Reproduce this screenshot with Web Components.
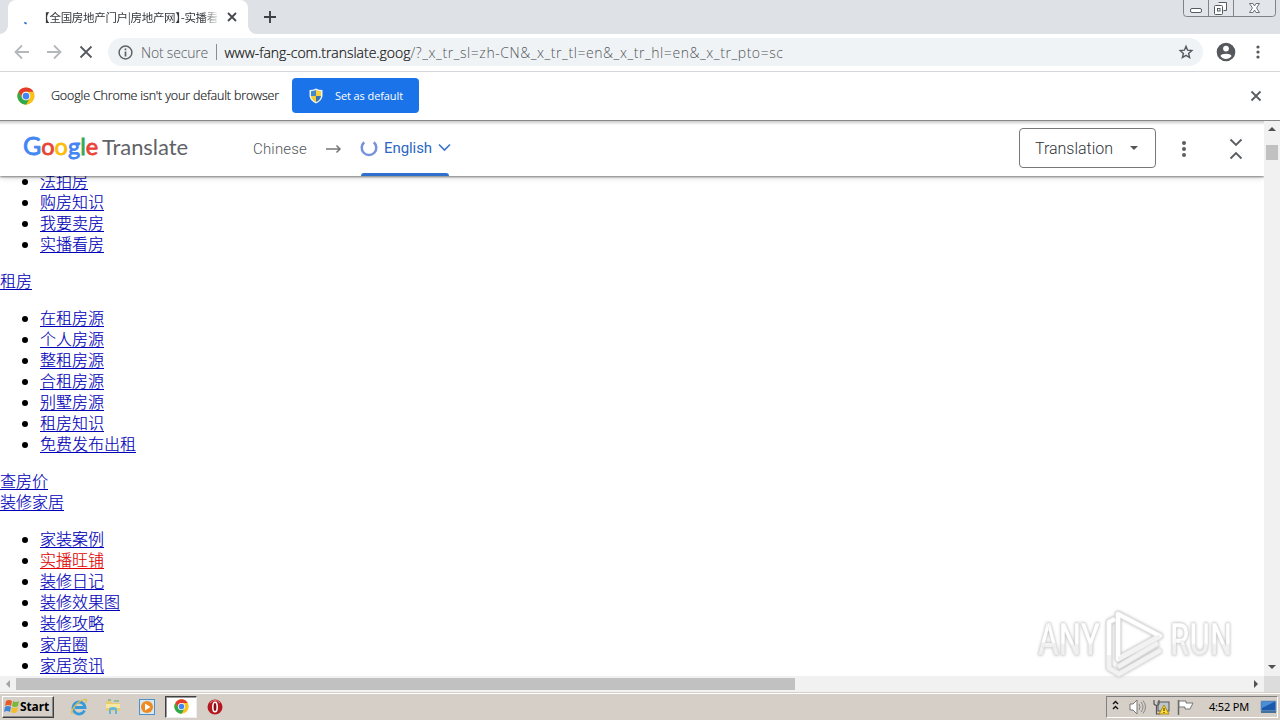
<!DOCTYPE html>
<html lang="en"><head><meta charset="utf-8"><title>Browser desktop</title>
<style>html,body{margin:0;width:1280px;height:720px;overflow:hidden;background:#fff}</style></head>
<body><desktop-screen></desktop-screen>
<script>
function define(name, html, setup) {
  const t = document.createElement('template');
  t.innerHTML = html;
  customElements.define(name, class extends HTMLElement {
    connectedCallback() {
      if (this.shadowRoot) return;
      this.attachShadow({mode: 'open'}).append(t.content.cloneNode(true));
      if (setup) setup(this, this.shadowRoot);
    }
  });
}

/* Text tracked out or in so that it fills the width given by its "w" attribute. */
define('fit-text', `<style>:host{display:inline-block;white-space:pre;flex:none}span{display:inline-block}</style><span><slot></slot></span>`, (el, root) => {
  const s = root.querySelector('span'), w = +el.getAttribute('w');
  const n = [...el.textContent].length;
  s.style.letterSpacing = ((w - s.getBoundingClientRect().width) / n) + 'px';
  el.style.width = w + 'px';
});

define('chrome-logo', `<style>:host{display:block;width:18px;height:18px;flex:none}svg{display:block;width:100%;height:100%}</style>
<svg viewBox="0 0 48 48"><circle cx="24" cy="24" r="23" fill="#fbc116"/>
<path d="M4.1 12.5A23 23 0 0 1 43.9 12.5H24A11.5 11.5 0 0 0 14 29.7Z" fill="#e33b2e"/>
<path d="M4.1 12.5A23 23 0 0 0 24 47L34 29.7A11.5 11.5 0 0 1 14 29.7Z" fill="#2da94f"/>
<circle cx="24" cy="24" r="11.5" fill="#fff"/><circle cx="24" cy="24" r="9" fill="#4285f4"/></svg>`);

define('window-buttons', `<style>:host{display:block;width:95px;height:18px}svg{display:block}</style>
<svg width="95" height="18" fill="none"><path d="M.5 0V13.5Q.5 16.5 3.5 16.5H89.5Q92.5 16.5 92.5 13.5V0" fill="#e2e5ea" stroke="#7f848c"/><path d="M25.5 0V16M50.5 0V16" stroke="#7f848c"/>
<rect x="7.500" y="8.500" width="11" height="4" rx="1.500" fill="#fff" stroke="#555a63"/>
<path d="M35.500 2.500h8v8h-3" stroke="#555a63" fill="#fff"/><rect x="31.500" y="5.500" width="8" height="9" rx="1" fill="#fff" stroke="#555a63"/><rect x="34.500" y="8.500" width="2.500" height="2.500" stroke="#555a63"/>
<path d="M66.500 3.500h3.500l1.500 2.500 1.500-2.500h3.500l-3 4.500 3 4.500H73l-1.500-2.500-1.500 2.500h-3.500l3-4.500z" fill="#fff" stroke="#60656e" stroke-width=".9"/></svg>`);

define('tab-strip', `<style>
:host{display:flex;height:34px;background:#dee1e6;position:relative;font:12px "Noto Sans","Noto Sans CJK SC",sans-serif;color:#35383c}
.tab{margin-left:8px;width:240px;background:#fff;border-radius:8px 8px 0 0;display:flex;align-items:center;position:relative}
.tab:before,.tab:after{content:"";position:absolute;bottom:0;width:8px;height:8px;left:-8px;background:radial-gradient(circle at 0 0,#dee1e6 7.5px,#fff 8px)}
.tab:after{left:auto;right:-8px;background:radial-gradient(circle at 100% 0,#dee1e6 7.5px,#fff 8px)}
.load{width:36px;flex:none}.load svg,.x,.plus{display:block}
.title{width:174px;overflow:hidden;white-space:nowrap;font-size:11.500px;font-family:"Noto Sans CJK SC",sans-serif;font-feature-settings:"halt";line-height:20px;-webkit-mask-image:linear-gradient(90deg,#000 158px,transparent 176px)}
.x{margin-left:9px}.plus{margin:11px 0 0 15px}
window-buttons{position:absolute;right:2px;top:0}</style>
<div class="tab"><div class="load"><svg width="36" height="34"><path d="M16.300 22.500l2.300 1.200" stroke="#2a6ed8" stroke-width="1.700"/></svg></div>
<div class="title"><fit-text w="174">【全国房地产门户|房地产网】-实播看</fit-text></div>
<svg class="x" width="10" height="10"><path d="M1 1l8 8M9 1l-8 8" stroke="#45494d" stroke-width="1.800"/></svg></div>
<svg class="plus" width="14" height="12"><path d="M7 0v12M1 6h12" stroke="#3c4043" stroke-width="1.900"/></svg>
<window-buttons></window-buttons>`);

define('address-bar', `<style>
:host{display:flex;box-sizing:border-box;height:38px;border-bottom:1px solid #d5d7da;padding:0 0 1px 14px;align-items:center;background:#fff;font:300 14px "Open Sans",sans-serif;color:#53575c}
svg{display:block;flex:none}.nav{margin-right:16px}.nav.stop{margin-right:14px}
.omni{width:1095px;height:28px;border-radius:14px;background:#f0f3f5;display:flex;align-items:center;box-sizing:border-box;padding-left:10px}
.info{margin-right:8px}.sep{width:1px;height:16px;background:#8a8e92;margin:0 8px 0 7.500px}.host{color:#111;-webkit-text-stroke:.2px #111}
.star{margin-left:auto;margin-right:9px}.user{margin-left:13px}.more{margin-left:19px}</style>
<svg class="nav" width="16" height="16" fill="none" stroke="#b5b8bb" stroke-width="1.800"><path d="M15 8H2M8 1.500L1.500 8 8 14.500"/></svg>
<svg class="nav" width="16" height="16" fill="none" stroke="#b5b8bb" stroke-width="1.800"><path d="M1 8h13M8 1.500L14.500 8 8 14.500"/></svg>
<svg class="nav stop" width="16" height="16" stroke="#55595e" stroke-width="1.800"><path d="M2.500 2.500l11 11M13.500 2.500l-11 11"/></svg>
<div class="omni"><svg class="info" width="15" height="15" fill="none" stroke="#5f6368"><circle cx="7.500" cy="7.500" r="6.400" stroke-width="1.500"/><path d="M7.500 6.500v5M7.500 3.500v1.800" stroke-width="1.700"/></svg>
<fit-text w="67">Not secure</fit-text><div class="sep"></div><fit-text class="host" w="186">www-fang-com.translate.goog</fit-text><fit-text w="373">/?_x_tr_sl=zh-CN&amp;_x_tr_tl=en&amp;_x_tr_hl=en&amp;_x_tr_pto=sc</fit-text>
<svg class="star" width="16" height="16" viewBox="0 0 16 16"><path d="M8 2.300l1.600 3.900 4.200.4-3.200 2.800 1 4.100L8 11.300l-3.600 2.200 1-4.100-3.200-2.800 4.200-.4z" fill="none" stroke="#55595e" stroke-width="1.400"/></svg></div>
<svg class="user" width="20" height="20"><circle cx="10" cy="10" r="9.300" fill="#55595e"/><circle cx="10" cy="6.600" r="2.900" fill="#fff"/><path d="M4.400 14c1-3 10.200-3 11.200 0-2.700 3.900-8.500 3.900-11.200 0z" fill="#fff"/></svg>
<svg class="more" width="6" height="16" fill="#55595e"><circle cx="3" cy="3" r="1.600"/><circle cx="3" cy="8" r="1.600"/><circle cx="3" cy="13" r="1.600"/></svg>`);

define('default-browser-bar', `<style>
:host{display:flex;height:48px;box-sizing:border-box;padding:0 0 1px 17px;align-items:center;background:#fff;font:300 12.500px "Open Sans",sans-serif;color:#202124}
.msg{margin-left:16px;-webkit-text-stroke:.2px #202124}.btn{margin-left:13px;width:127px;height:35px;border-radius:4px;background:#1a73e8;color:#fff;display:flex;align-items:center;box-sizing:border-box;padding-left:17px;font-size:11px;font-weight:400}
.btn svg{margin-right:12px}.close{margin:0 18px 0 auto}</style>
<chrome-logo></chrome-logo><fit-text class="msg" w="228">Google Chrome isn't your default browser</fit-text>
<div class="btn"><svg width="14" height="16"><path d="M7 .5Q10 2 13.500 2v6Q13 13 7 15.500Q1 13 .5 8V2Q4 2 7 .5Z" fill="#eef3f5"/><path d="M7 2Q5 3 2 3.200V8h5z" fill="#4389cc"/><path d="M7 2Q9 3 12 3.200V8H7z" fill="#f6d13c"/><path d="M2 8q.5 4 5 6V8z" fill="#f5ce35"/><path d="M12 8q-.5 4-5 6V8z" fill="#3873b6"/></svg><fit-text w="68">Set as default</fit-text></div>
<svg class="close" width="12" height="12"><path d="M1.500 1.500l9 9M10.500 1.500l-9 9" stroke="#5b5f63" stroke-width="1.900"/></svg>`);

define('google-wordmark', `<style>:host{display:flex;align-items:baseline;font:400 23.500px/32px "Lato",sans-serif;color:#5f6368}
.g{display:flex;align-items:baseline;width:74px;justify-content:space-between;margin-right:5px;-webkit-text-stroke:.8px}.b{color:#4285f4}.r{color:#ea4335}.y{color:#fbbc05}.n{color:#34a853}.G{font-size:25px}.t{font-size:22px}</style>
<div class="g"><span class="b G">G</span><span class="r">o</span><span class="y">o</span><span class="b">g</span><span class="n">l</span><span class="r">e</span></div><fit-text class="t" w="86">Translate</fit-text>`);

define('translate-bar', `<style>
:host{display:flex;height:55px;width:1264px;box-sizing:border-box;padding-left:23px;align-items:center;background:#fff;position:relative;z-index:2;box-shadow:0 1px 2px #0007,0 2px 6px #0002;font:300 15px Roboto,sans-serif;color:#53575c}
:host:before{content:"";position:absolute;left:0;right:0;top:0;height:4px;background:linear-gradient(#0003,#0000)}
svg{display:block;flex:none}google-wordmark{width:165px;margin-top:-5px}.zh{margin-left:65px}.arr{margin:0 0 0 18px}
.en{margin-left:19px;width:88px;height:55px;display:flex;align-items:center;color:#2b67c5;position:relative;padding-bottom:2px;box-sizing:border-box;font-weight:400}
.en:after{content:"";position:absolute;left:0;right:0;bottom:0;height:3px;border-radius:3px 3px 0 0;background:#2f6fce}
.en fit-text{margin:0 6px 0 6px}
.sel{margin-left:570px;width:137px;height:40px;box-sizing:border-box;border:1px solid #777;border-radius:4px;display:flex;align-items:center;justify-content:space-between;padding:0 17px 0 15px;font-size:16px;color:#303337;margin-top:-1px}
.more{margin-left:25px}.fold{margin-left:42px}</style>
<google-wordmark></google-wordmark><fit-text class="zh" w="54">Chinese</fit-text>
<svg class="arr" width="17" height="10" fill="none" stroke="#777" stroke-width="1.500"><path d="M1 5h14M11.500 1.500L15 5l-3.500 3.500"/></svg>
<div class="en"><svg width="18" height="18" fill="none" style="margin-left:-1px"><path d="M4.200 3.200A7.300 7.300 0 1 0 13.800 3.200" stroke="#7592db" stroke-width="2.500"/></svg><fit-text w="48">English</fit-text><svg width="13" height="9" fill="none"><path d="M1 1.500l5.500 5.500L12 1.500" stroke="#3973ca" stroke-width="1.600"/></svg></div>
<div class="sel"><fit-text w="78">Translation</fit-text><svg width="8" height="4"><path d="M0 0h8L4 4z" fill="#555"/></svg></div>
<svg class="more" width="6" height="18" fill="#5b5e62"><circle cx="3" cy="3" r="2"/><circle cx="3" cy="9" r="2"/><circle cx="3" cy="15" r="2"/></svg>
<svg class="fold" width="14" height="22" fill="none" stroke="#5b5e62" stroke-width="1.900"><path d="M1.500 1.500L7 7l5.500-5.500M1.500 20.500L7 15l5.500 5.500"/></svg>`);

define('link-list', `<style>:host{display:block}ul{margin:0;padding:16px 0 16px 40px;list-style:none}li{height:21px;line-height:21px;white-space:nowrap;position:relative}li:before{content:"";position:absolute;left:-18px;top:8px;width:6px;height:6px;border-radius:50%;background:#000}
a{color:#0000b8;-webkit-text-stroke:.15px;text-decoration:underline;text-underline-offset:2px;text-decoration-thickness:1px}a.hot{color:#e00000}</style><ul></ul>`, (el, root) => {
  const ul = root.querySelector('ul');
  for (const name of el.getAttribute('items').split(',')) {
    const li = document.createElement('li'), a = document.createElement('a');
    a.textContent = name.replace('*', '');
    if (name.startsWith('*')) a.className = 'hot';
    a.href = '#'; li.append(a); ul.append(li);
  }
});

define('run-watermark', `<style>:host{display:block}svg{display:block;filter:drop-shadow(0 0 1.500px #b4b4b4)}text{font:500 44px Roboto,sans-serif}</style>
<svg width="210" height="72" fill="#fff" stroke-linejoin="round"><defs><linearGradient id="f" x1="0" y1="0" x2="0" y2="1"><stop offset=".55" stop-color="#fff"/><stop offset=".6" stop-color="#f0f0f0"/></linearGradient></defs><g stroke="#ddd" stroke-width=".4" fill="url(#f)"><text x="5" y="50" textLength="62" lengthAdjust="spacingAndGlyphs">ANY</text><text x="137" y="50" textLength="62" lengthAdjust="spacingAndGlyphs">RUN</text></g>
<g fill="none" stroke="#e3e3e3" stroke-width="6"><path d="M82 14l-6 3v46l10 6 42-24M85 9v45l42-23zM85 62l40-24"/></g><g fill="none" stroke="#fff" stroke-width="4"><path d="M82 14l-6 3v46M85 9v45l42-23z"/></g><g fill="none" stroke="#f2f2f2" stroke-width="4"><path d="M85 54l42-23M85 62l40-24M76 50v13l10 6 42-24"/></g></svg>`);

define('scroll-bar', `<style>:host{display:flex;background:#f1f1f1;align-items:center;box-sizing:border-box}
:host([dir-v]){flex-direction:column;width:16px}:host([dir-h]){height:16px;width:1264px}
i{display:block;background:#c1c1c1}:host([dir-v]) i{width:12px;height:15px;margin-top:8px}:host([dir-h]) i{width:779px;height:12px}
svg{display:block;flex:none}.last{margin-left:auto}:host([dir-v]) .last{margin:auto 0 0}</style>
<svg class="first" width="16" height="16"><path/></svg><i></i><svg class="last" width="16" height="16"><path/></svg>`, (el, root) => {
  const [a, b] = root.querySelectorAll('path');
  const v = el.hasAttribute('dir-v');
  a.setAttribute('d', v ? 'M4 10h8L8 6z' : 'M10 4v8L6 8z');
  b.setAttribute('d', v ? 'M4 5h8L8 9z' : 'M6 4v8l4-4z');
  a.setAttribute('fill', v ? '#505050' : '#a3a3a3');
  b.setAttribute('fill', '#505050');
});

define('web-page', `<style>
:host{display:grid;grid-template:555px 16px/1264px 16px;font:16px/21px "Liberation Sans","Noto Sans CJK SC",sans-serif;font-weight:300;position:relative;background:#f1f1f1}
.view{background:#fff;overflow:hidden;display:flex;flex-direction:column}.doc{margin-top:-21px}.row{height:21px}
a{color:#0000b8;-webkit-text-stroke:.15px;text-decoration:underline;text-underline-offset:2px;text-decoration-thickness:1px}
translate-bar{flex:none}scroll-bar[dir-v]{height:555px}.corner{background:#dcdcdc}run-watermark{position:absolute;left:1033px;top:484px}</style>
<div class="view"><translate-bar></translate-bar><div class="doc">
<link-list items="法拍房,购房知识,我要卖房,实播看房"></link-list>
<div class="row"><a href="#">租房</a></div>
<link-list items="在租房源,个人房源,整租房源,合租房源,别墅房源,租房知识,免费发布出租"></link-list>
<div class="row"><a href="#">查房价</a></div><div class="row"><a href="#">装修家居</a></div>
<link-list items="家装案例,*实播旺铺,装修日记,装修效果图,装修攻略,家居圈,家居资讯"></link-list></div></div>
<scroll-bar dir-v></scroll-bar><scroll-bar dir-h></scroll-bar><div class="corner"></div><run-watermark></run-watermark>`);

define('task-bar', `<style>
:host{display:flex;height:28px;box-sizing:border-box;background:#d5cfc8;border-top:1px solid #d5cfc8;box-shadow:inset 0 1px #fff;padding:2px 2px 2px;align-items:center;font:11px "DejaVu Sans",sans-serif;color:#000}
svg{display:block;flex:none}.start{width:52px;height:22px;box-sizing:border-box;border:1px solid;border-color:#fff #404040 #404040 #fff;box-shadow:inset -1px -1px #888;display:flex;align-items:center;font:700 12px "Noto Sans",sans-serif;padding-left:1px}
.q{display:flex;align-items:center;margin-left:15px}.slot{width:34px;height:22px;display:flex;align-items:center;justify-content:center}
.on{box-sizing:border-box;width:32px;margin:0 1px;background:#fff;border:1px solid;border-color:#404040 #eee #eee #404040;box-shadow:inset 1px 1px #999}chrome-logo{width:15px;height:15px}
.tray{margin-left:auto;width:172px;height:22px;box-sizing:border-box;border:1px solid;border-color:#808080 #fff #fff #808080;display:flex;align-items:center}.time{margin-left:14px;font-family:"Noto Sans",sans-serif}</style>
<div class="start"><svg width="16" height="17"><path d="M2 3q3-2 6 0L7 8Q4 6 1 8z" fill="#e75b2b"/><path d="M9 3q3 2 6 0l-1 5q-3 2-6 0z" fill="#78b83a"/><path d="M1 9q3-2 6 0l-1 5q-3-2-6 0z" fill="#3f87d6"/><path d="M8 9q3 2 6 0l-1 5q-3 2-6 0z" fill="#f3bd2c"/></svg><fit-text w="29">Start</fit-text></div>
<div class="q"><div class="slot" style="width:20px"><svg width="18" height="18" fill="none"><path d="M14.500 12.500a6 6 0 1 1 .5-3H5" stroke="#389bd8" stroke-width="2.800"/><path d="M2.500 16C-.5 14 6 4 14 1.500c3-.8 3 1 1.500 3" stroke="#e2bd43" stroke-width="1.300"/></svg></div>
<div class="slot" style="margin-left:7px"><svg width="17" height="17"><path d="M1 3h5l1 2h8v8H1z" fill="#e8cc70"/><path d="M3 2h3M9 3h5" stroke="#57aa69"/><path d="M1 6h14v4H1z" fill="#f8e7a1"/><path d="M4 16v-5q0-2 4-2t4 2v5h-2v-4H6v4z" fill="#65b6dc"/></svg></div>
<div class="slot"><svg width="16" height="16"><rect x=".5" y=".5" width="15" height="15" fill="#d8e8f3" stroke="#4b92c8"/><circle cx="8" cy="8" r="6" fill="#ef8920"/><path d="M6 4.500v7L11.500 8z" fill="#fff"/></svg></div>
<div class="slot on"><chrome-logo></chrome-logo></div>
<div class="slot"><svg width="16" height="16"><circle cx="8" cy="8" r="7.500" fill="#b51920"/><path d="M3 4q5-5 10 0" stroke="#e88380" fill="none"/><ellipse cx="8" cy="8" rx="2.200" ry="4.800" fill="#8d0c15" stroke="#fff" stroke-width="1.600"/></svg></div></div>
<div class="tray"><svg width="88" height="20" fill="none"><path d="M6 7l2.500-2.500L11 7M6 12l2.500-2.500L11 12" stroke="#111" stroke-width="1.400"/>
<path d="M23 7h3l4-4v14l-4-4h-3z" fill="#fff" stroke="#777"/><path d="M32 7q2 3 0 6M34 5q4 5 0 10M36 3.500q5 6.500 0 13" stroke="#888"/>
<rect x="51" y="5" width="11" height="9" fill="#bcc7cc" stroke="#555"/><path d="M47 3v4q3 3 5 0V3M49.500 8v9h4" stroke="#555" stroke-width="1.200"/><path d="M57 8l5 9H52z" fill="#ffdb35" stroke="#ae8714"/><path d="M57 11v3M57 15v1" stroke="#222"/>
<path d="M71.500 3v15" stroke="#666" stroke-width="1.500"/><path d="M72 4h7v2h7l-3 6h-5v-2h-6z" fill="#fff" stroke="#777"/></svg>
<fit-text class="time" w="40">4:52 PM</fit-text><svg width="17" height="16" style="margin-left:11px"><rect x="1" y="2" width="15" height="10" fill="#1a59ac" stroke="#8da8c7"/><path d="M2 3h12L2 9z" fill="#4a90d7"/><path d="M1 13h15" stroke="#477297" stroke-width="2"/></svg></div>`);

define('desktop-screen', `<style>:host{display:flex;flex-direction:column;width:1280px;height:720px;overflow:hidden;background:#fff}tab-strip,address-bar,default-browser-bar,web-page,task-bar{flex:none}.edge{height:1px;background:#888}</style>
<tab-strip></tab-strip><address-bar></address-bar><default-browser-bar></default-browser-bar><div class="edge"></div><web-page></web-page><task-bar></task-bar>`);
</script></body></html>
